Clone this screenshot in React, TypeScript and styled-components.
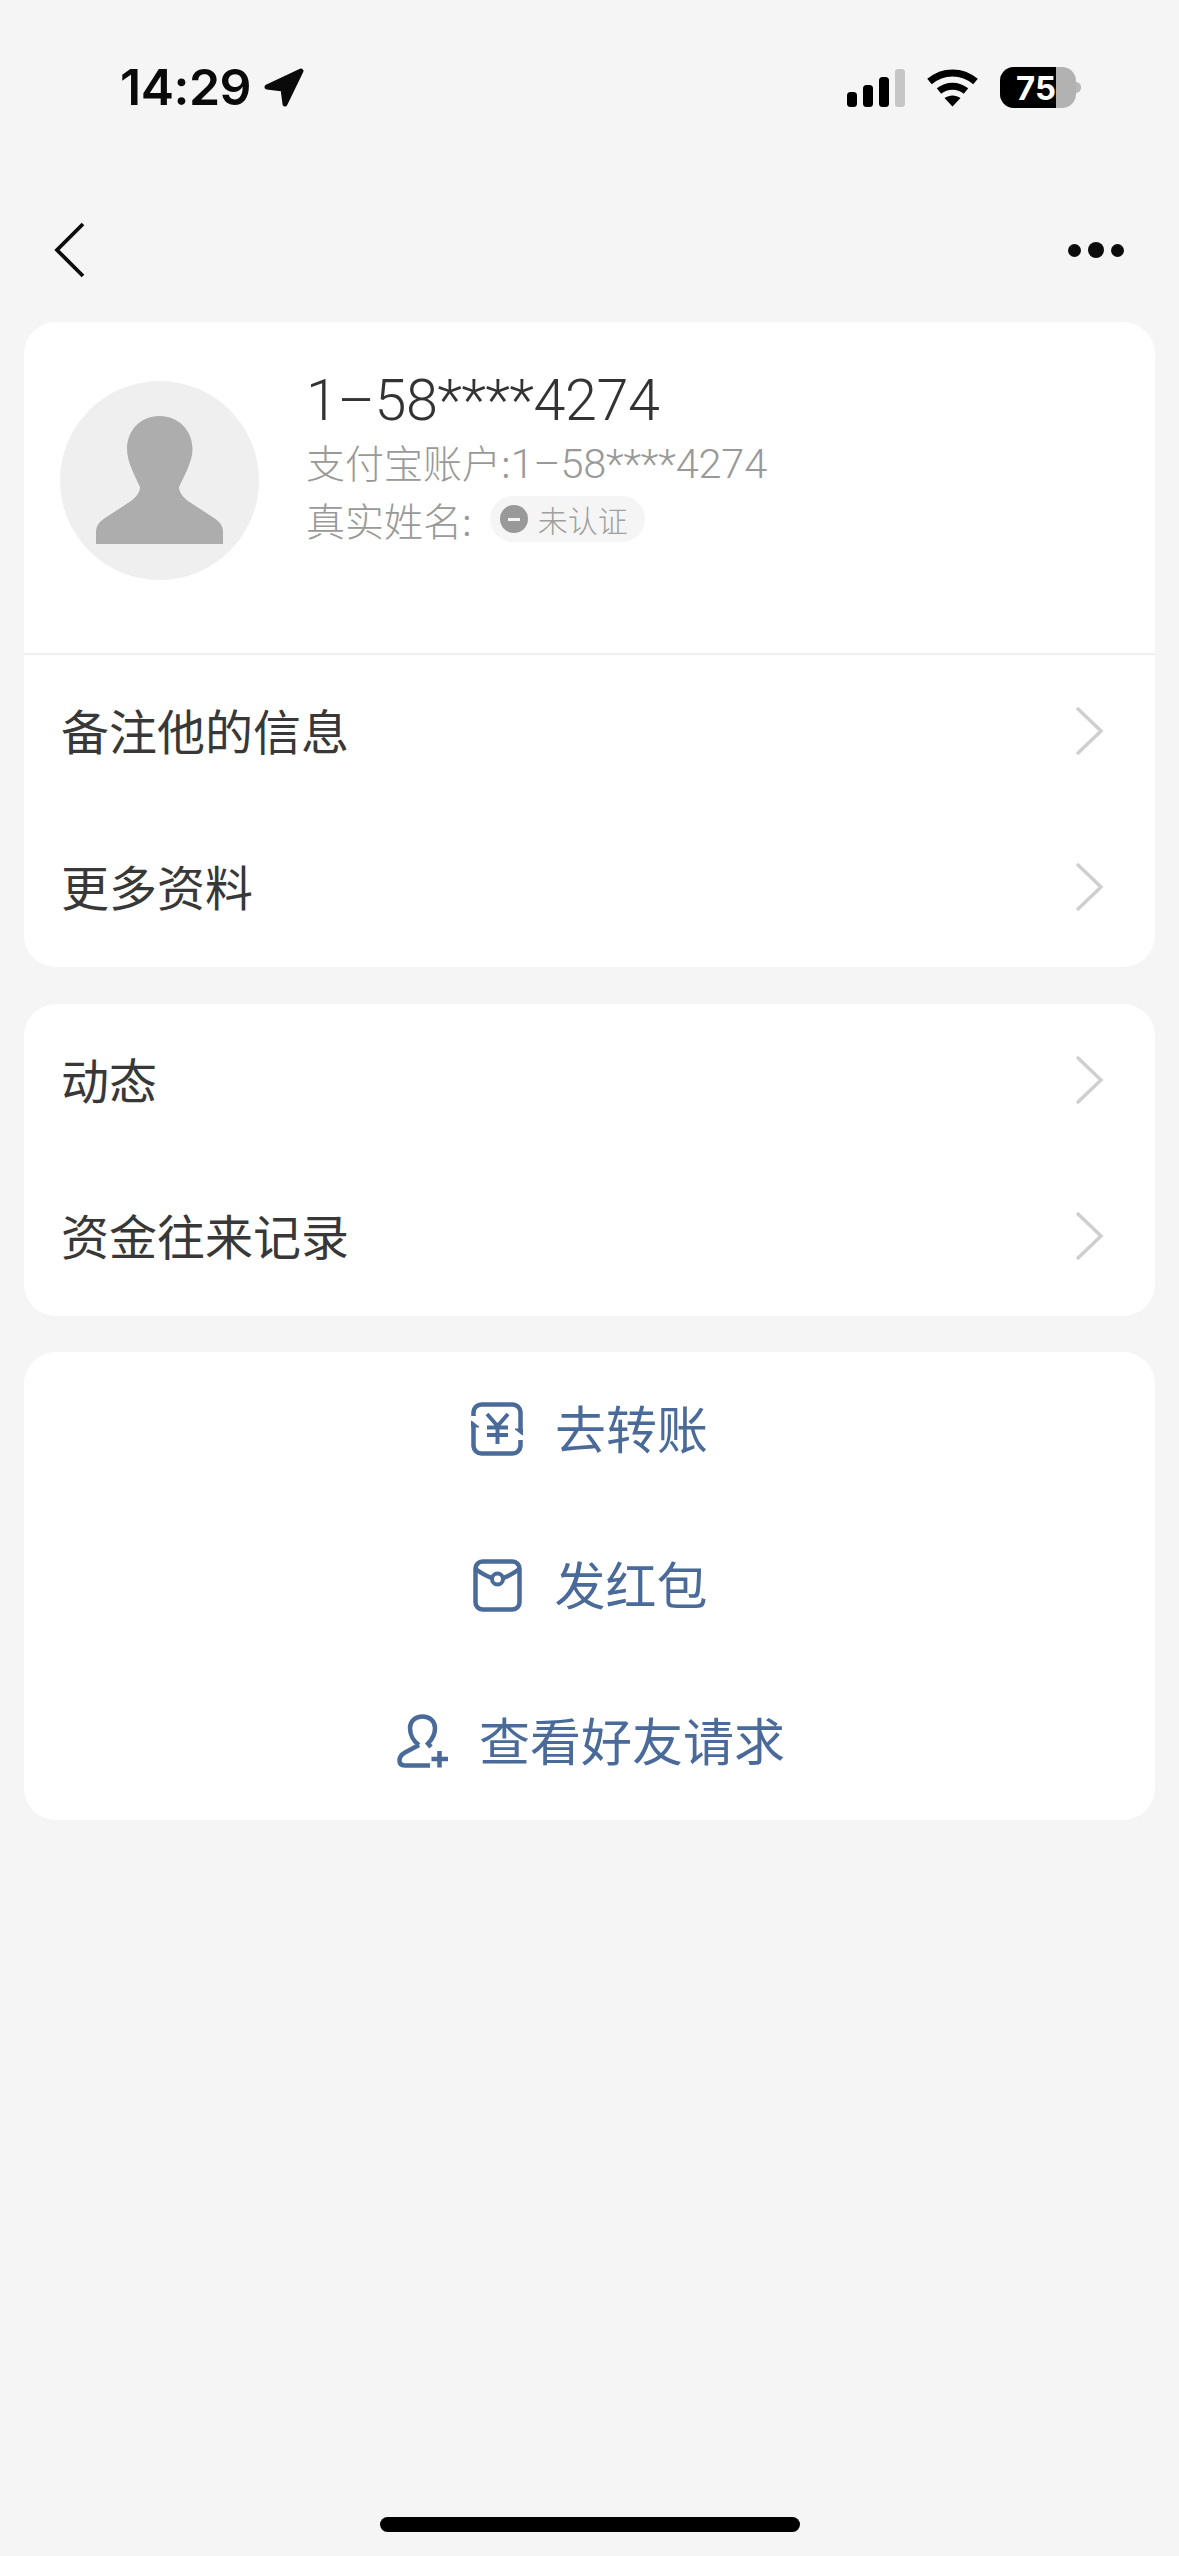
import styled, { createGlobalStyle } from "styled-components"

const GlobalStyle = createGlobalStyle`
  html, body {
    margin: 0;
    padding: 0;
    background: #f5f5f5;
  }
  * {
    box-sizing: border-box;
  }
`

const cjk = `"Noto Sans CJK SC", "Liberation Sans", sans-serif`
const blue = "#4a6b9a"

const Page = styled.div`
  width: 1179px;
  height: 2556px;
  display: flex;
  flex-direction: column;
  background: #f5f5f5;
  font-family: ${cjk};
  overflow: hidden;
`

const StatusBar = styled.div`
  height: 178px;
  flex-shrink: 0;
  padding: 67px 98px 0 120px;
  display: flex;
  justify-content: space-between;
  align-items: flex-start;
`

const TimeGroup = styled.div`
  display: flex;
  align-items: center;
  gap: 13px;
  height: 41px;
`

const Time = styled.span`
  font-family: Inter, "Liberation Sans", sans-serif;
  font-weight: 600;
  font-size: 50px;
  line-height: 41px;
  color: #0a0a0a;
  letter-spacing: -0.5px;
`

const StatusIcons = styled.div`
  display: flex;
  align-items: center;
  height: 41px;
`

const Signal = styled.svg`
  margin-right: 22px;
`

const Wifi = styled.svg`
  margin-right: 22px;
`

const BatteryCell = styled.div`
  width: 76px;
  height: 41px;
  border-radius: 14px;
  background: #b2b2b2;
  overflow: hidden;
`

const BatteryFill = styled.div`
  width: 56px;
  height: 100%;
  background: #000;
  color: #fff;
  display: flex;
  align-items: center;
  justify-content: flex-end;
  font-family: Inter, "Liberation Sans", sans-serif;
  font-weight: 700;
  font-size: 33px;
`

const BatteryNub = styled.div`
  width: 5px;
  height: 11px;
  background: #b8b8b8;
  border-radius: 0 6px 6px 0;
`

const NavBar = styled.div`
  height: 144px;
  flex-shrink: 0;
  padding: 0 55px 0 53px;
  display: flex;
  justify-content: space-between;
  align-items: center;
`

const Dots = styled.div`
  display: flex;
  align-items: center;
  gap: 7px;
`

const Dot = styled.span<{ $size: number }>`
  width: ${(p) => p.$size}px;
  height: ${(p) => p.$size}px;
  border-radius: 50%;
  background: #0c0c0c;
`

const Cards = styled.div`
  padding: 0 24px;
  display: flex;
  flex-direction: column;
  gap: 36.5px;
`

const Card = styled.section`
  background: #fff;
  border-radius: 32px;
  overflow: hidden;
`

const Profile = styled.div`
  height: 333px;
  padding: 59px 0 0 36px;
  display: flex;
  align-items: flex-start;
  gap: 47px;
  border-bottom: 2px solid #f0f0f0;
`

const Avatar = styled.div`
  width: 199px;
  height: 199px;
  flex-shrink: 0;
  border-radius: 50%;
  background: #efefef;
  padding-top: 35px;
  display: flex;
  justify-content: center;
  align-items: flex-start;
`

const Info = styled.div`
  margin-top: -12px;
  display: flex;
  flex-direction: column;
`

const Name = styled.div`
  font-family: Roboto, "Liberation Sans", sans-serif;
  font-weight: 300;
  font-size: 57.5px;
  line-height: 64px;
  letter-spacing: -0.4px;
  color: #333;
`

const Account = styled.div`
  font-size: 39px;
  font-weight: 300;
  line-height: 56px;
  color: #999;
`

const AccountDigits = styled.span`
  font-family: Roboto, "Liberation Sans", sans-serif;
  font-weight: 300;
  font-size: 41.5px;
  letter-spacing: -0.2px;
`

const RealName = styled.div`
  display: flex;
  align-items: center;
  gap: 18px;
  font-size: 39px;
  font-weight: 300;
  line-height: 54px;
  color: #999;
`

const Pill = styled.div`
  height: 46px;
  padding: 0 17px 0 10px;
  border-radius: 23px;
  background: #f5f5f5;
  display: flex;
  align-items: center;
  gap: 10px;
  font-size: 30px;
  line-height: 46px;
  color: #a0a0a0;
`

const MinusBadge = styled.span`
  width: 28px;
  height: 28px;
  border-radius: 50%;
  background: #999;
  display: flex;
  align-items: center;
  justify-content: center;
  &::before {
    content: "";
    width: 12px;
    height: 3px;
    background: #f5f5f5;
  }
`

const Row = styled.div`
  height: 156px;
  padding: 0 50px 4px 37px;
  display: flex;
  justify-content: space-between;
  align-items: center;
  font-size: 48px;
  font-weight: 400;
  color: #383838;
`

const Label = styled.span`
  padding-bottom: 4px;
`

const Action = styled.div<{ $gap: number; $shift: number }>`
  height: 156px;
  padding: 0 0 2px ${(p) => p.$shift}px;
  display: flex;
  justify-content: center;
  align-items: center;
  gap: ${(p) => p.$gap}px;
  font-size: 51px;
  color: ${blue};
`

const HomeBar = styled.div`
  width: 420px;
  height: 15px;
  margin: auto auto 24px;
  border-radius: 8px;
  background: #000;
`

const Chevron = () => (
  <svg width="30" height="48" viewBox="0 0 30 48" fill="none">
    <path d="M2 1 L26 24 L2 47" stroke="#cfcfcf" strokeWidth="3.5" />
  </svg>
)

const TransferIcon = () => (
  <svg width="52" height="54" viewBox="0 0 52 54" fill="none" stroke={blue} strokeWidth="4.5">
    <path d="M2.5 14 V10 A8 8 0 0 1 10.5 2.5 H41.5 A8 8 0 0 1 49.5 10 V30" />
    <path d="M49.5 38 V44 A8 8 0 0 1 41.5 51.5 H10.5 A8 8 0 0 1 2.5 44 V23" />
    <path d="M0.5 19 L8 25 H0.5 Z" fill={blue} strokeWidth="1" />
    <path d="M51.5 33 L44 27 H51.5 Z" fill={blue} strokeWidth="1" />
    <path d="M16 12 L26.5 24 L37 12 M26.5 24 V42 M16 25.5 H37 M16 33 H37" strokeWidth="4" />
  </svg>
)

const EnvelopeIcon = () => (
  <svg width="49" height="53" viewBox="0 0 49 53" fill="none" stroke={blue} strokeWidth="4.5">
    <rect x="2.5" y="2.5" width="44" height="48" rx="7" />
    <path d="M2.5 10 C8 14 13 17 19 19 M30 19 C36 17 41 14 46.5 10" />
    <circle cx="24.5" cy="20" r="5.5" strokeWidth="4" />
  </svg>
)

const AddFriendIcon = () => (
  <svg width="52" height="54" viewBox="0 0 52 54" fill="none" stroke={blue} strokeWidth="4.5">
    <path d="M22 31 C16 27 13 20 13 14 C13 7 18.5 2.5 25.5 2.5 C32.5 2.5 38 7 38 14 C38 20 35.5 25 31 29.5 L34 33" />
    <path d="M22 31 L8 38.5 C3.5 41 2.5 44 2.5 46.5 C2.5 50 4.5 51.5 8 51.5 H33" />
    <path d="M34.5 45 H51 M42.5 37 V53.5" />
  </svg>
)

const rows = [
  ["备注他的信息", "更多资料"],
  ["动态", "资金往来记录"],
]

export default function App() {
  return (
    <Page>
      <GlobalStyle />
      <StatusBar>
        <TimeGroup>
          <Time>14:29</Time>
          <svg width="40" height="39" viewBox="0 0 40 39" fill="#0a0a0a" stroke="#0a0a0a" strokeWidth="5" strokeLinejoin="round">
            <path d="M3 19 L37 3 L21 36 L19 21 Z" />
          </svg>
        </TimeGroup>
        <StatusIcons>
          <Signal width="58" height="38" viewBox="0 0 58 38">
            <rect x="0" y="23" width="10" height="15" rx="3.5" fill="#000" />
            <rect x="16" y="16" width="10" height="22" rx="3.5" fill="#000" />
            <rect x="32" y="8" width="10" height="30" rx="3.5" fill="#000" />
            <rect x="48" y="0" width="10" height="38" rx="3" fill="#c6c6c6" />
          </Signal>
          <Wifi width="51" height="38" viewBox="0 0 51 38" fill="none" stroke="#000" strokeWidth="7">
            <path d="M2.5 12.5 C16 1 35 1 48.5 12.5" />
            <path d="M12 22 C20 15.5 31 15.5 39 22" />
            <path d="M17.5 29 C22.5 25.5 28.5 25.5 33.5 29 L25.5 37.5 Z" fill="#000" stroke="none" />
          </Wifi>
          <BatteryCell>
            <BatteryFill>75</BatteryFill>
          </BatteryCell>
          <BatteryNub />
        </StatusIcons>
      </StatusBar>

      <NavBar>
        <svg width="32" height="56" viewBox="0 0 32 56" fill="none">
          <path d="M30 2 L4 28 L30 54" stroke="#0c0c0c" strokeWidth="3.8" />
        </svg>
        <Dots>
          <Dot $size={13} />
          <Dot $size={16} />
          <Dot $size={13} />
        </Dots>
      </NavBar>

      <Cards>
        <Card>
          <Profile>
            <Avatar>
              <svg width="127" height="128" viewBox="0 0 127 128" fill="#adadad">
                <path d="M63.5 0 C83 0 96.5 15 96.5 33 C96.5 46 88 60 83 71 C83 76 86 80 92 85 L118 102 C124 106 127 110 127 116 V128 H0 V116 C0 110 3 106 9 102 L35 85 C41 80 44 76 44 71 C39 60 31 46 31 33 C31 15 44 0 63.5 0 Z" />
              </svg>
            </Avatar>
            <Info>
              <Name>1–58****4274</Name>
              <Account>
                支付宝账户:<AccountDigits>1–58****4274</AccountDigits>
              </Account>
              <RealName>
                真实姓名:
                <Pill>
                  <MinusBadge />
                  未认证
                </Pill>
              </RealName>
            </Info>
          </Profile>
          {rows[0].map((label) => (
            <Row key={label}>
              <Label>{label}</Label>
              <Chevron />
            </Row>
          ))}
        </Card>

        <Card>
          {rows[1].map((label) => (
            <Row key={label}>
              <Label>{label}</Label>
              <Chevron />
            </Row>
          ))}
        </Card>

        <Card>
          <Action $gap={32} $shift={0}>
            <TransferIcon />
            <Label>去转账</Label>
          </Action>
          <Action $gap={32} $shift={2}>
            <EnvelopeIcon />
            <Label>发红包</Label>
          </Action>
          <Action $gap={30} $shift={3}>
            <AddFriendIcon />
            <Label>查看好友请求</Label>
          </Action>
        </Card>
      </Cards>

      <HomeBar />
    </Page>
  )
}
